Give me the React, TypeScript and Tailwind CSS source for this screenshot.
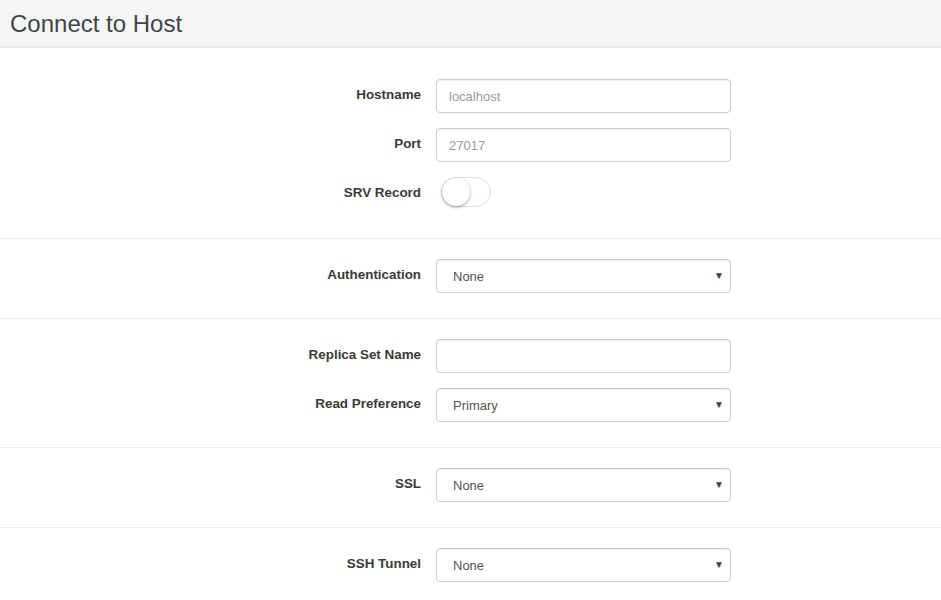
import { ReactNode } from 'react';

function Row({ label, children, nudge = '-mt-[1px]' }: { label: string; children: ReactNode; nudge?: string }) {
  return (
    <div className="flex items-center">
      <label className={`w-[421px] text-right text-[13.4px] font-bold text-[#3a3a3a] ${nudge}`}>{label}</label>
      <div className="ml-[15px] w-[295px]">{children}</div>
    </div>
  );
}

function TextInput({ placeholder }: { placeholder?: string }) {
  return (
    <input
      type="text"
      placeholder={placeholder}
      className="h-[34px] w-full rounded-[4px] border border-[#ccc] px-[12px] text-[13px] text-[#555] placeholder:text-[#999] shadow-[inset_0_1px_1px_rgba(0,0,0,0.075)] outline-none"
    />
  );
}

function Select({ value }: { value: string }) {
  return (
    <div className="relative h-[34px] w-full rounded-[4px] border border-[#ccc] bg-white shadow-[inset_0_1px_1px_rgba(0,0,0,0.075)]">
      <span className="absolute left-[16px] top-[7px] text-[13px] text-[#555]">{value}</span>
      <span className="absolute right-[6px] top-[8px] text-[10px] text-[#444]">▼</span>
    </div>
  );
}

export default function App() {
  return (
    <div className="min-h-[600px] bg-white font-['Liberation_Sans',Arial,sans-serif]">
      <div className="h-[48px] border-b-2 border-[#e8e9eb] bg-[#f5f6f7] pl-[10px] pt-[10px]">
        <h1 className="text-[24px] leading-[28px] text-[#444]">Connect to Host</h1>
      </div>

      <div className="flex flex-col gap-[15px] border-b border-[#ececec] pt-[31px] pb-[31px]">
        <Row label="Hostname">
          <TextInput placeholder="localhost" />
        </Row>
        <Row label="Port">
          <TextInput placeholder="27017" />
        </Row>
        <Row label="SRV Record" nudge="mt-[3px]">
          <div className="ml-[5px] h-[30px] w-[50px] rounded-full border border-[#dfdfdf] bg-white">
            <div className="h-[28px] w-[28px] rounded-full bg-white shadow-[0_1px_3px_rgba(0,0,0,0.4)]" />
          </div>
        </Row>
      </div>

      <div className="border-b border-[#ececec] pt-[20px] pb-[25px]">
        <Row label="Authentication">
          <Select value="None" />
        </Row>
      </div>

      <div className="flex flex-col gap-[15px] border-b border-[#ececec] pt-[20px] pb-[25px]">
        <Row label="Replica Set Name">
          <TextInput />
        </Row>
        <Row label="Read Preference">
          <Select value="Primary" />
        </Row>
      </div>

      <div className="border-b border-[#ececec] pt-[20px] pb-[25px]">
        <Row label="SSL">
          <Select value="None" />
        </Row>
      </div>

      <div className="pt-[20px] pb-[25px]">
        <Row label="SSH Tunnel">
          <Select value="None" />
        </Row>
      </div>
    </div>
  );
}
